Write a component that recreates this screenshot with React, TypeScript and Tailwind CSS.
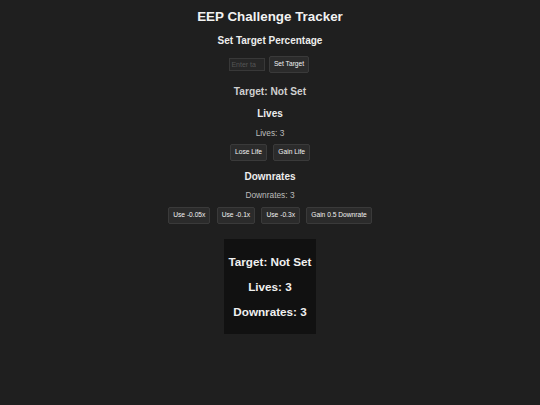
import React from "react";

const font = { fontFamily: '"Liberation Sans", Arial, sans-serif' };

function Btn({ children }: { children: React.ReactNode }) {
  return (
    <button className="h-[17px] px-[4px] rounded-[2px] bg-[#2b2b2b] border border-[#3a3a3a] text-[6.67px] leading-none text-[#f2f2f2] whitespace-nowrap">
      {children}
    </button>
  );
}

export default function App() {
  return (
    <div
      className="w-[540px] h-[405px] bg-[#1f1f1f] text-white flex flex-col items-center overflow-hidden"
      style={font}
    >
      <h1 className="mt-[9px] text-[13.4px] leading-[16px] font-bold text-[#f2f2f2]">
        EEP Challenge Tracker
      </h1>
      <h2 className="mt-[9.7px] text-[10px] leading-[12px] font-bold text-[#ededed]">
        Set Target Percentage
      </h2>
      <div className="mt-[9.3px] flex items-center gap-[4px] h-[17px] -ml-[2px]">
        <input
          placeholder="Enter target"
          className="w-[36px] h-[12.5px] pl-[1.5px] pr-[8px] bg-[#262626] border border-[#383838] text-[7px] text-[#ddd] placeholder:text-[#555] outline-none"
        />
        <Btn>Set Target</Btn>
      </div>
      <h3 className="mt-[13px] text-[10.2px] leading-[12px] font-bold text-[#cfcfcf]">
        Target: Not Set
      </h3>
      <h2 className="mt-[10px] text-[10px] leading-[12px] font-bold text-[#ededed]">
        Lives
      </h2>
      <p className="mt-[7.6px] text-[8.33px] leading-[10px] text-[#bdbdbd]">Lives: 3</p>
      <div className="mt-[6px] flex gap-[6.3px]">
        <Btn>Lose Life</Btn>
        <Btn>Gain Life</Btn>
      </div>
      <h2 className="mt-[10.5px] text-[10px] leading-[12px] font-bold text-[#ededed]">
        Downrates
      </h2>
      <p className="mt-[7px] text-[8.33px] leading-[10px] text-[#bdbdbd]">Downrates: 3</p>
      <div className="mt-[7px] flex gap-[6.3px]">
        <Btn>Use -0.05x</Btn>
        <Btn>Use -0.1x</Btn>
        <Btn>Use -0.3x</Btn>
        <Btn>Gain 0.5 Downrate</Btn>
      </div>
      <div className="mt-[15px] w-[92px] bg-[#111111] px-[4px] py-[15.8px] flex flex-col items-center gap-[11.7px]">
        <h3 className="text-[11.7px] leading-[13.4px] font-bold text-[#f0f0f0] whitespace-nowrap">
          Target: Not Set
        </h3>
        <h3 className="text-[11.7px] leading-[13.4px] font-bold text-[#f0f0f0] whitespace-nowrap">
          Lives: 3
        </h3>
        <h3 className="text-[11.7px] leading-[13.4px] font-bold text-[#f0f0f0] whitespace-nowrap">
          Downrates: 3
        </h3>
      </div>
    </div>
  );
}
